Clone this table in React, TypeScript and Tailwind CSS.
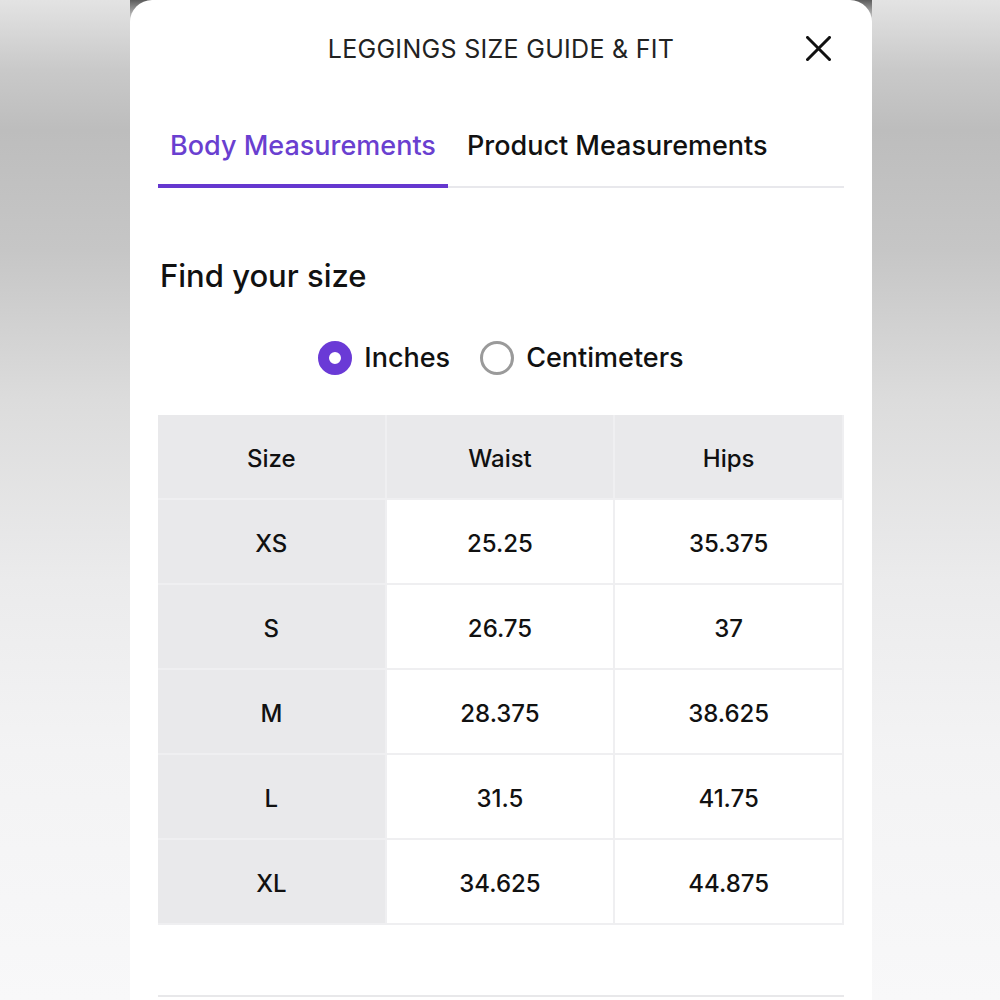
import React, { useState } from 'react';

const rows = [
  { size: 'XS', waist: '25.25', hips: '35.375' },
  { size: 'S', waist: '26.75', hips: '37' },
  { size: 'M', waist: '28.375', hips: '38.625' },
  { size: 'L', waist: '31.5', hips: '41.75' },
  { size: 'XL', waist: '34.625', hips: '44.875' },
];

function Radio({ checked, label, onClick }: { checked: boolean; label: string; onClick: () => void }) {
  return (
    <button onClick={onClick} className="flex items-center gap-3 cursor-pointer">
      {checked ? (
        <span className="w-[34px] h-[34px] rounded-full border-[11px] border-[#6a3ad6] bg-white" />
      ) : (
        <span className="w-[34px] h-[34px] rounded-full border-[3px] border-[#9a9a9a] bg-white" />
      )}
      <span className="text-[27px] leading-[34px] font-medium text-[#111]">{label}</span>
    </button>
  );
}

export default function App() {
  const [unit, setUnit] = useState<'in' | 'cm'>('in');
  const [tab, setTab] = useState<'body' | 'product'>('body');

  return (
    <div
      className="w-[1000px] h-[1000px] overflow-hidden flex pl-[130px] bg-[linear-gradient(180deg,#e3e3e3_0%,#c9c9c9_7%,#bdbdbd_13%,#c6c6c6_25%,#dcdcdc_40%,#ebebec_58%,#f3f3f4_75%,#f8f8f9_100%)]"
      style={{ fontFamily: 'Inter, "Noto Sans", sans-serif' }}
    >
      <div className="w-[742px] h-full bg-[linear-gradient(180deg,#5c5c5c_0px,#9a9a9a_10px,transparent_22px)]">
        <div className="w-full h-full bg-white rounded-t-[22px] px-[28px] flex flex-col">
          {/* Header */}
          <div className="h-[100px] flex items-center justify-center relative">
            <h2 className="text-[25px] font-normal tracking-[0.3px] text-[#222]">LEGGINGS SIZE GUIDE &amp; FIT</h2>
            <button className="absolute right-[13px] top-[36px] cursor-pointer" title="Close">
              <svg width="25" height="25" viewBox="0 0 25 25" fill="none" stroke="#111" strokeWidth="3" strokeLinecap="square">
                <path d="M1.5 1.5L23.5 23.5M23.5 1.5L1.5 23.5" />
              </svg>
            </button>
          </div>

          {/* Tabs */}
          <div className="flex border-b-2 border-[#e8e8ec]">
            <button
              onClick={() => setTab('body')}
              className={`pt-[30px] pb-[22px] px-[12px] -mb-[2px] border-b-4 text-[27px] leading-[32px] font-medium cursor-pointer ${
                tab === 'body' ? 'border-[#6537cf] text-[#6a3fd0]' : 'border-transparent text-[#111]'
              }`}
            >
              Body Measurements
            </button>
            <button
              onClick={() => setTab('product')}
              className={`pt-[30px] pb-[22px] pl-[19px] pr-[13px] -mb-[2px] border-b-4 text-[27px] leading-[32px] font-medium cursor-pointer ${
                tab === 'product' ? 'border-[#6537cf] text-[#6a3fd0]' : 'border-transparent text-[#111]'
              }`}
            >
              Product Measurements
            </button>
          </div>

          <h3 className="mt-[70px] pl-[2px] text-[31px] leading-[36px] font-medium text-[#111]">Find your size</h3>

          <div className="mt-[47px] flex items-center justify-center gap-[30px]">
            <Radio checked={unit === 'in'} label="Inches" onClick={() => setUnit('in')} />
            <Radio checked={unit === 'cm'} label="Centimeters" onClick={() => setUnit('cm')} />
          </div>

          {/* Size table */}
          <div className="mt-[40px] grid grid-cols-3 gap-[2px] bg-[#efeff1] border-r-2 border-b-2 border-[#efeff1]">
            {['Size', 'Waist', 'Hips'].map((h) => (
              <div key={h} className="h-[83px] pt-[5px] flex items-center justify-center bg-[#e9e9eb] text-[24px] font-medium text-[#111]">
                {h}
              </div>
            ))}
            {rows.map((r) => (
              <React.Fragment key={r.size}>
                <div className="h-[83px] pt-[5px] flex items-center justify-center bg-[#e9e9eb] text-[24px] font-medium text-[#111]">
                  {r.size}
                </div>
                <div className="h-[83px] pt-[5px] flex items-center justify-center bg-white text-[24px] font-medium text-[#111]">
                  {unit === 'in' ? r.waist : (parseFloat(r.waist) * 2.54).toFixed(1)}
                </div>
                <div className="h-[83px] pt-[5px] flex items-center justify-center bg-white text-[24px] font-medium text-[#111]">
                  {unit === 'in' ? r.hips : (parseFloat(r.hips) * 2.54).toFixed(1)}
                </div>
              </React.Fragment>
            ))}
          </div>

          <div className="mt-[70px] h-[2px] bg-[#e8e8ea]" />
        </div>
      </div>
    </div>
  );
}
